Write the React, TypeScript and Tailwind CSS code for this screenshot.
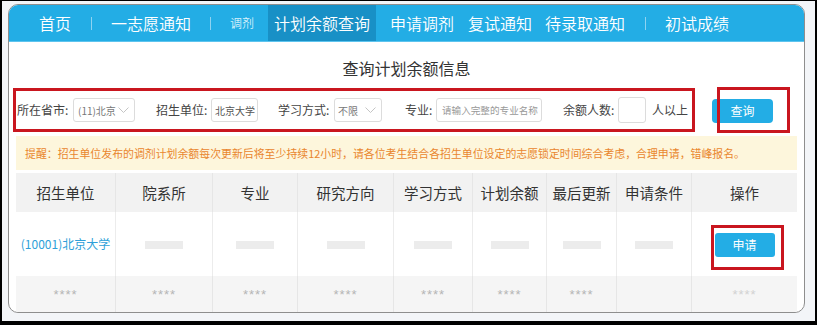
import React from "react";

const navFont = "font-['Noto_Sans_CJK_SC','Noto_Sans',sans-serif]";

function Chevron() {
  return (
    <svg width="11" height="7" viewBox="0 0 11 7" className="ml-auto mr-[5px]">
      <polyline points="0.5,0.5 5.5,5.5 10.5,0.5" fill="none" stroke="#c4c4c4" strokeWidth="1" />
    </svg>
  );
}

function Sep({ ml }: { ml: string }) {
  return <span className={`${ml} h-[13px] w-px bg-[#8fd3f1]`}></span>;
}

const columns = [
  "招生单位",
  "院系所",
  "专业",
  "研究方向",
  "学习方式",
  "计划余额",
  "最后更新",
  "申请条件",
  "操作",
];

export default function App() {
  return (
    <div
      className={`w-[817px] h-[325px] overflow-hidden bg-[#f3f5f8] border-t border-l-2 border-r-2 border-b-4 border-black ${navFont}`}
    >
      <div className="ml-[6px] mt-[3px] w-[797px] h-[309px] rounded-[10px] border border-[#8e8e8e] bg-white overflow-hidden">
        {/* nav */}
        <div className="flex items-center h-[37px] bg-[#23ade5] border-b border-[#5ec4ee] text-white text-[16px] font-[350]">
          <span className="ml-[30px]">首页</span>
          <Sep ml="ml-[20px]" />
          <span className="ml-[19px]">一志愿通知</span>
          <Sep ml="ml-[19px]" />
          <span className="ml-[19px] text-[12px] text-[#d8f1fb]">调剂</span>
          <span className="ml-[14px] h-full flex items-center px-[6px] bg-[#1890c6]">
            计划余额查询
          </span>
          <span className="ml-[14px]">申请调剂</span>
          <span className="ml-[14px]">复试通知</span>
          <span className="ml-[13px]">待录取通知</span>
          <Sep ml="ml-[20px]" />
          <span className="ml-[19px]">初试成绩</span>
        </div>

        {/* title */}
        <div className="pt-[14px] pb-[8px] leading-[24px] text-center text-[16px] text-[#333]">
          查询计划余额信息
        </div>

        {/* filters */}
        <div className="flex items-center h-[44px] pl-[4px]">
          <div className="flex items-center w-[682px] h-[44px] border-[3px] border-[#c9161f] text-[12px] text-[#444] whitespace-nowrap">
            <span className="ml-[1px] w-[56px]">所在省市:</span>
            <div className="flex items-center w-[62px] h-[24px] border border-[#dcdcdc] rounded-[3px] pl-[4px] text-[10px] text-[#777]">
              (11)北京
              <Chevron />
            </div>
            <span className="ml-[21px] w-[55px]">招生单位:</span>
            <div className="flex items-center w-[47px] h-[24px] border border-[#dcdcdc] rounded-[3px] pl-[3px] text-[10px] text-[#555]">
              北京大学
            </div>
            <span className="ml-[20px] w-[56px]">学习方式:</span>
            <div className="flex items-center w-[48px] h-[24px] border border-[#dcdcdc] rounded-[3px] pl-[3px] text-[10px] text-[#777]">
              不限
              <Chevron />
            </div>
            <span className="ml-[23px] w-[31px]">专业:</span>
            <div className="flex items-center w-[106px] h-[24px] border border-[#dcdcdc] rounded-[3px] pl-[5px] text-[9.6px] text-[#999]">
              请输入完整的专业名称
            </div>
            <span className="ml-[21px] w-[55px]">余额人数:</span>
            <div className="w-[28px] h-[26px] border border-[#dcdcdc] rounded-[3px]"></div>
            <span className="ml-[6px]">人以上</span>
          </div>
          <div className="relative ml-[17px]">
            <button className="w-[61px] h-[24px] rounded-[4px] bg-[#23ade5] text-white text-[12px]">
              查询
            </button>
            <div className="absolute left-[5px] -top-[10px] w-[73px] h-[46px] border-[3px] border-[#c9161f]"></div>
          </div>
        </div>

        <div className="px-[7px]">
          {/* notice */}
          <div className="mt-[4px] h-[34px] flex items-center pl-[9px] bg-[#fdf6dc] text-[10.9px] text-[#e9862e] whitespace-nowrap">
            提醒：招生单位发布的调剂计划余额每次更新后将至少持续12小时，请各位考生结合各招生单位设定的志愿锁定时间综合考虑，合理申请，错峰报名。
          </div>

          {/* table */}
          <div className="mt-[3px] grid grid-cols-[99px_97px_85px_96px_79px_74px_70px_75px_106px]">
            {columns.map((c, i) => (
              <div
                key={c}
                className={`h-[39px] flex items-center justify-center bg-[#f2f2f2] text-[14.5px] text-[#333] ${
                  i > 0 ? "border-l border-[#e6e6e6]" : ""
                }`}
              >
                {c}
              </div>
            ))}

            {columns.map((c, i) => (
              <div
                key={"d" + c}
                className={`h-[64px] flex items-center justify-center bg-white ${
                  i > 0 ? "border-l border-[#ececec]" : ""
                }`}
              >
                {i === 0 ? (
                  <span className="text-[12px] text-[#2e9fd9]">(10001)北京大学</span>
                ) : i === 8 ? (
                  <div className="relative">
                    <button className="w-[60px] h-[24px] rounded-[3px] bg-[#23ade5] text-white text-[12px]">
                      申请
                    </button>
                    <div className="absolute -left-[4px] -top-[6px] w-[73px] h-[45px] border-[3px] border-[#c9161f]"></div>
                  </div>
                ) : (
                  <div className="w-[38px] h-[8px] bg-[#ececec] mt-[2px]"></div>
                )}
              </div>
            ))}

            {columns.map((c, i) => (
              <div
                key={"s" + c}
                className={`h-[40px] flex items-center justify-center bg-[#f5f5f5] font-['Liberation_Sans',sans-serif] text-[13px] tracking-[1px] ${
                  i === 8 ? "text-[#d2d2d2]" : "text-[#b5b5b5]"
                } ${i > 0 ? "border-l border-[#e6e6e6]" : ""}`}
              >
                <span className="-mt-[2px]">{i === 7 ? "" : "****"}</span>
              </div>
            ))}
          </div>
        </div>
      </div>
    </div>
  );
}
